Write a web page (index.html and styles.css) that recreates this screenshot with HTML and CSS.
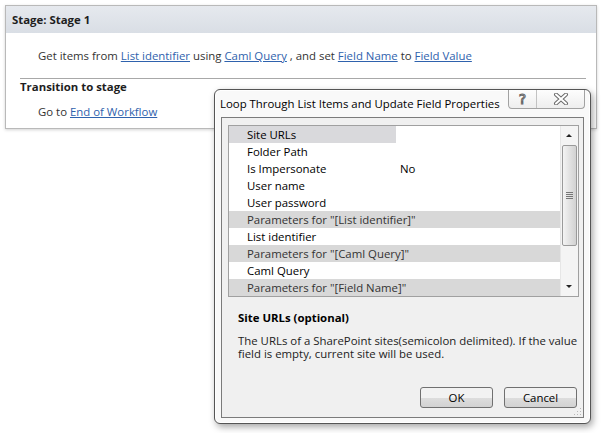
FILE: index.html
```html
<!DOCTYPE html>
<html lang="en">
<head>
  <meta charset="UTF-8" />
  <title>Stage: Stage 1</title>
  <link rel="stylesheet" href="styles.css">
</head>
<body>

<div class="stage">
  <div class="stage-head">Stage: Stage 1</div>
  <div class="stage-body">
    <p class="action">Get items from <a href="#">List identifier</a> using <a href="#">Caml Query</a> , and set <a href="#">Field Name</a> to <a href="#">Field Value</a></p>
    <div class="transition">
      <div class="transition-title">Transition to stage</div>
      <p class="action goto">Go to <a href="#">End of Workflow</a></p>
    </div>
  </div>
</div>

<div class="dialog">
  <div class="dlg-title">Loop Through List Items and Update Field Properties</div>
  <div class="caption-btns">
    <span class="cap help">?</span>
    <span class="cap close">
      <svg width="16" height="12" viewBox="0 0 16 12">
        <path d="M3 1.5 L13 10.5 M13 1.5 L3 10.5" stroke="#6a6a6a" stroke-width="4" stroke-linecap="round"/>
        <path d="M3 1.5 L13 10.5 M13 1.5 L3 10.5" stroke="#fff" stroke-width="2" stroke-linecap="round"/>
      </svg>
    </span>
  </div>

  <div class="client">
    <div class="grid">
      <div class="rows">
        <div class="row"><span class="name selected">Site URLs</span><span class="value"></span></div>
        <div class="row"><span class="name">Folder Path</span><span class="value"></span></div>
        <div class="row"><span class="name">Is Impersonate</span><span class="value">No</span></div>
        <div class="row"><span class="name">User name</span><span class="value"></span></div>
        <div class="row"><span class="name">User password</span><span class="value"></span></div>
        <div class="row category">Parameters for "[List identifier]"</div>
        <div class="row"><span class="name">List identifier</span><span class="value"></span></div>
        <div class="row category">Parameters for "[Caml Query]"</div>
        <div class="row"><span class="name">Caml Query</span><span class="value"></span></div>
        <div class="row category">Parameters for "[Field Name]"</div>
      </div>
      <div class="scrollbar">
        <div class="sb-arrow up"></div>
        <div class="sb-track">
          <div class="sb-thumb"><span class="grip"></span></div>
        </div>
        <div class="sb-arrow down"></div>
      </div>
    </div>

    <div class="desc">
      <div class="desc-title">Site URLs (optional)</div>
      <p class="desc-text">The URLs of a SharePoint sites(semicolon delimited). If the value field is empty, current site will be used.</p>
    </div>

    <div class="buttons">
      <button class="btn">OK</button>
      <button class="btn">Cancel</button>
    </div>

    <svg class="grip-corner" width="8" height="8" viewBox="0 0 8 8">
      <rect x="6" y="0" width="1" height="1" fill="#b8b8b8"/>
      <rect x="3" y="3" width="1" height="1" fill="#b8b8b8"/>
      <rect x="6" y="3" width="1" height="1" fill="#b8b8b8"/>
      <rect x="0" y="6" width="1" height="1" fill="#b8b8b8"/>
      <rect x="3" y="6" width="1" height="1" fill="#b8b8b8"/>
      <rect x="6" y="6" width="1" height="1" fill="#b8b8b8"/>
    </svg>
  </div>
</div>

</body>
</html>
```

FILE: styles.css
```css
body {
  margin: 0;
  padding: 5px;
  background: #fff;
  font-family: "Open Sans", "Noto Sans", sans-serif;
  font-size: 11.4px;
  color: #333;
}

a {
  color: #2f62ad;
  text-decoration: underline;
}

/* workflow stage */

.stage {
  height: 122px;
  border: 1px solid #b9b9b9;
  box-shadow: 0 1px 3px rgba(0, 0, 0, 0.18);
}

.stage-head {
  height: 27px;
  line-height: 27px;
  padding-left: 6px;
  background: linear-gradient(#e6e9ee, #d9dee5);
  font-weight: bold;
  color: #1e1e1e;
}

.stage-body {
  padding: 15px 10px 0 14px;
}

.action {
  margin: 0;
  padding-left: 18px;
  line-height: 16px;
}

.transition {
  margin-top: 14px;
  border-top: 1px solid #a8a8a8;
}

.transition-title {
  line-height: 15px;
  font-weight: bold;
  color: #1e1e1e;
}

.goto {
  margin-top: 10px;
}

/* dialog window */

.dialog {
  position: absolute;
  left: 214px;
  top: 89px;
  width: 377px;
  height: 335px;
  box-sizing: border-box;
  border: 1px solid #555;
  border-radius: 6px;
  background: #f9f9f9;
  box-shadow: 2px 3px 7px rgba(0, 0, 0, 0.35), inset 0 0 0 1px #fff;
  display: flex;
  flex-direction: column;
}

.dlg-title {
  height: 27px;
  line-height: 28px;
  padding-left: 5px;
  color: #000;
}

.caption-btns {
  position: absolute;
  top: 0;
  right: 5px;
  display: flex;
  height: 18px;
  border: 1px solid #a2a2a2;
  border-top: none;
  border-radius: 0 0 4px 4px;
  background: linear-gradient(#fdfdfd, #eeeeee);
}

.cap {
  display: flex;
  align-items: center;
  justify-content: center;
}

.help {
  width: 27px;
  border-right: 1px solid #c2c2c2;
  font-size: 14px;
  color: #fff;
  -webkit-text-stroke: 1px #666;
  font-family: "DejaVu Sans", sans-serif;
}

.close {
  width: 47px;
}

.client {
  position: relative;
  height: 301px;
  margin: 0 6px;
  box-sizing: border-box;
  border: 1px solid #7b7b7b;
  background: #f0f0f0;
  padding: 7px 4px 9px 6px;
  display: flex;
  flex-direction: column;
  color: #000;
}

/* property grid */

.grid {
  display: flex;
  height: 170px;
  border: 1px solid #a0a0a0;
  background: #fff;
}

.rows {
  flex: 1;
}

.row {
  display: flex;
  height: 17px;
  line-height: 18px;
}

.row .name {
  width: 149px;
  padding-left: 18px;
}

.row .name.selected {
  background: #d9d9dc;
}

.row .value {
  padding-left: 4px;
}

.row.category {
  padding-left: 18px;
  background: #d8d8d8;
  color: #333;
}

.scrollbar {
  width: 17px;
  display: flex;
  flex-direction: column;
  background: #f4f4f4;
  border-left: 1px solid #e6e6e6;
}

.sb-arrow {
  height: 18px;
  position: relative;
}

.sb-arrow::after {
  content: "";
  position: absolute;
  left: 5px;
  border-left: 3px solid transparent;
  border-right: 3px solid transparent;
}

.sb-arrow.up::after {
  top: 8px;
  border-bottom: 3px solid #222;
}

.sb-arrow.down::after {
  top: 7px;
  border-top: 3px solid #222;
}

.sb-track {
  flex: 1;
  padding-top: 1px;
}

.sb-thumb {
  height: 99px;
  margin: 0 1px;
  border: 1px solid #9a9a9a;
  border-radius: 2px;
  background: linear-gradient(to right, #f4f4f4, #e2e2e2 50%, #d2d2d2);
  display: flex;
  align-items: center;
  justify-content: center;
}

.grip {
  width: 7px;
  height: 7px;
  background: repeating-linear-gradient(#777 0 1px, transparent 1px 2px);
}

/* description */

.desc {
  padding-left: 10px;
  margin-top: 13px;
}

.desc-title {
  line-height: 16px;
  font-weight: bold;
}

.desc-text {
  margin: 8px 0 0;
  line-height: 13px;
  color: #222;
}

.buttons {
  margin-top: auto;
  display: flex;
  justify-content: flex-end;
  gap: 11px;
  padding-right: 2px;
}

.btn {
  width: 73px;
  height: 21px;
  border: 1px solid #707070;
  border-radius: 3px;
  background: linear-gradient(#f2f2f2 50%, #dedede 50%, #d2d2d2);
  font-family: "Open Sans", "Noto Sans", sans-serif;
  font-size: 11.4px;
  color: #000;
  padding: 0;
}

.grip-corner {
  position: absolute;
  right: 1px;
  bottom: 1px;
}
```
